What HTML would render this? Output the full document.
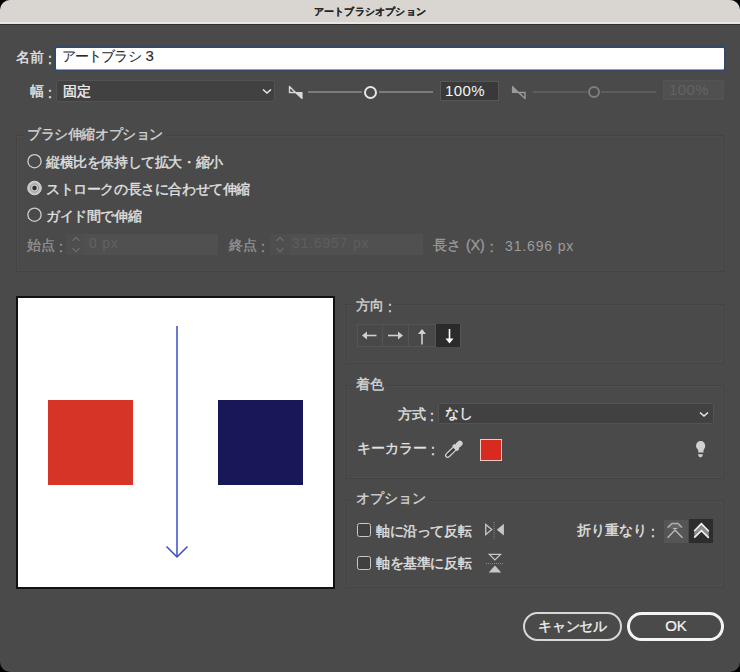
<!DOCTYPE html>
<html lang="ja">
<head>
<meta charset="utf-8">
<style>
*{box-sizing:border-box;margin:0;padding:0}
html,body{width:740px;height:672px;overflow:hidden;background:#000}
body{font-family:"Liberation Sans",sans-serif;color:#d4d4d4;position:relative;-webkit-text-stroke-width:0.35px}
.c{position:relative;top:1.5px}
.win{position:absolute;left:0;top:0;width:740px;height:672px;background:#4a4a4a;border-radius:10px;overflow:hidden}
.titlebar{position:absolute;left:0;top:0;width:740px;height:25px;background:#d9d5d1;border-bottom:1px solid #33312f;box-shadow:inset 0 -2px 0 #e9e6e3}
.title{position:absolute;left:0;top:4px;width:740px;text-align:center;font-size:10.3px;font-weight:bold;color:#262626;line-height:15px;-webkit-text-stroke-width:0.1px;letter-spacing:0.2px}
.a{position:absolute;white-space:nowrap}
.lbl{font-size:14px;line-height:16px;color:#e2e2e2}
.group{position:absolute;border:1px solid #434343;box-shadow:inset 0 0 0 1px #4e4e4e}
.ls{letter-spacing:-0.4px}
.legend{position:absolute;background:#4a4a4a;padding:0 3px 0 3px;font-size:14px;line-height:16px;color:#d6d6d6}
</style>
</head>
<body>
<div class="win">
  <div class="titlebar"><div class="title">アートブラシオプション</div></div>

  <!-- name -->
  <div class="a lbl" style="left:16px;top:49px">名前 <span class="c">:</span></div>
  <div class="a" style="left:54px;top:45px;width:672px;height:26px;border-radius:3px;background:#34496c;box-shadow:0 1px 0 #2b5566"></div>
  <div class="a" style="left:56px;top:48px;width:668px;height:21px;background:#fff;border-radius:1px;box-shadow:0 1px 0 #5fb5d5"></div>
  <div class="a" style="left:62px;top:47px;font-size:14px;line-height:18px;color:#2a2a2a;-webkit-text-stroke-width:0.1px;letter-spacing:-0.9px">アートブラシ<span style="letter-spacing:0;margin-left:5px;font-size:15px">3</span></div>

  <!-- width -->
  <div class="a lbl" style="left:30px;top:83px">幅 <span class="c">:</span></div>
  <div class="a" style="left:56px;top:80px;width:219px;height:22px;background:#414141;border:1px solid #535353;border-radius:2px"></div>
  <div class="a lbl" style="left:63px;top:83px;color:#f0f0f0">固定</div>
  <svg class="a" style="left:260px;top:86px" width="14" height="10"><path d="M3 3.5 L7 7 L11 3.5" fill="none" stroke="#e8e8e8" stroke-width="1.6"/></svg>

  <svg class="a" style="left:286px;top:83px" width="20" height="19"><path d="M3.5 3.5 L9.5 9.5 L3.5 9.5 Z" fill="none" stroke="#d8d8d8" stroke-width="1.4" stroke-linejoin="round"/><path d="M9.5 9.5 L16 9.5 L16 15.5 Z" fill="#d8d8d8" stroke="#d8d8d8" stroke-width="1.2" stroke-linejoin="round"/></svg>
  <div class="a" style="left:308px;top:91px;width:54px;height:2px;background:#7c7c7c"></div><div class="a" style="left:379px;top:91px;width:54px;height:2px;background:#7c7c7c"></div>
  <div class="a" style="left:364px;top:85.5px;width:13px;height:13px;border-radius:50%;border:2px solid #e6e6e6;background:#4a4a4a"></div>
  <div class="a" style="left:440px;top:81px;width:59px;height:20px;background:#393939;border:1px solid #575757"></div>
  <div class="a" style="left:445px;top:81.5px;font-size:15px;line-height:18px;color:#f6f6f6;-webkit-text-stroke-width:0;letter-spacing:0.4px">100%</div>

  <svg class="a" style="left:509px;top:83px" width="20" height="19"><path d="M3.5 3.5 L9.5 9.5 L3.5 9.5 Z" fill="#9a9a9a" stroke="#9a9a9a" stroke-width="1.2" stroke-linejoin="round"/><path d="M9.5 9.5 L16 9.5 L16 15.5 Z" fill="none" stroke="#9a9a9a" stroke-width="1.4" stroke-linejoin="round"/></svg>
  <div class="a" style="left:533px;top:91px;width:54px;height:2px;background:#5c5c5c"></div><div class="a" style="left:601px;top:91px;width:55px;height:2px;background:#5c5c5c"></div>
  <div class="a" style="left:588px;top:86px;width:12px;height:12px;border-radius:50%;border:2px solid #7e7e7e;background:#4a4a4a"></div>
  <div class="a" style="left:663px;top:80px;width:61px;height:20px;background:#505050;border:1px solid #545454"></div>
  <div class="a" style="left:669px;top:81px;font-size:15px;line-height:18px;color:#626262;-webkit-text-stroke-width:0;letter-spacing:0.4px">100%</div>

  <!-- group 1 -->
  <div class="group" style="left:16px;top:135px;width:708px;height:137px"></div>
  <div class="legend a ls" style="left:24px;top:126px">ブラシ伸縮オプション</div>
  <svg class="a" style="left:26px;top:153px" width="18" height="18"><circle cx="8.5" cy="8.2" r="6.6" fill="none" stroke="#cdcdcd" stroke-width="1.3"/></svg>
  <div class="a lbl ls" style="left:46px;top:154px">縦横比を保持して拡大・縮小</div>
  <svg class="a" style="left:26px;top:180px" width="18" height="18"><circle cx="8.5" cy="8" r="6.8" fill="#c4c4c4" stroke="#d6d6d6" stroke-width="1"/><circle cx="8.5" cy="8" r="4.2" fill="none" stroke="#9a9a9a" stroke-width="1"/><circle cx="8.5" cy="8" r="2.2" fill="#2a2a2a"/></svg>
  <div class="a lbl ls" style="left:46px;top:181px">ストロークの長さに合わせて伸縮</div>
  <svg class="a" style="left:26px;top:207px" width="18" height="18"><circle cx="8.5" cy="7.7" r="6.6" fill="none" stroke="#cdcdcd" stroke-width="1.3"/></svg>
  <div class="a lbl ls" style="left:46px;top:208px">ガイド間で伸縮</div>

  <div class="a lbl" style="left:27px;top:237px;color:#939393">始点 <span class="c">:</span></div>
  <div class="a" style="left:66px;top:234px;width:18px;height:21px;background:#4e4e4e"></div>
  <svg class="a" style="left:69px;top:235px" width="14" height="20"><path d="M3.5 5.8 L7 2.3 L10.5 5.8 M3.5 13.2 L7 16.7 L10.5 13.2" fill="none" stroke="#6e6e6e" stroke-width="1.2"/></svg>
  <div class="a" style="left:84px;top:234px;width:134px;height:21px;background:#505050"></div>
  <div class="a" style="left:89px;top:234.5px;font-size:14px;line-height:17px;color:#626262;-webkit-text-stroke-width:0;letter-spacing:0.8px">0 px</div>

  <div class="a lbl" style="left:229px;top:237px;color:#939393">終点 <span class="c">:</span></div>
  <div class="a" style="left:270px;top:234px;width:20px;height:21px;background:#4e4e4e"></div>
  <svg class="a" style="left:273px;top:235px" width="14" height="20"><path d="M3.5 5.8 L7 2.3 L10.5 5.8 M3.5 13.2 L7 16.7 L10.5 13.2" fill="none" stroke="#6e6e6e" stroke-width="1.2"/></svg>
  <div class="a" style="left:290px;top:234px;width:133px;height:21px;background:#505050"></div>
  <div class="a" style="left:292px;top:234.5px;font-size:14px;line-height:17px;color:#5e5e5e;-webkit-text-stroke-width:0;letter-spacing:0.8px">31.6957 px</div>

  <div class="a lbl" style="left:433px;top:237px;color:#9a9a9a">長さ<span style="margin-left:5px">(X)</span><span class="c" style="margin-left:5px">:</span></div>
  <div class="a" style="left:505px;top:238px;font-size:14px;line-height:17px;color:#9c9c9c;letter-spacing:0.85px;-webkit-text-stroke-width:0">31.696 px</div>

  <!-- preview -->
  <div class="a" style="left:16px;top:296px;width:319px;height:293px;background:#fff;border:2px solid #111"></div>
  <div class="a" style="left:48px;top:400px;width:85px;height:85px;background:#d63427"></div>
  <div class="a" style="left:218px;top:400px;width:85px;height:85px;background:#181757"></div>
  <svg class="a" style="left:150px;top:320px" width="50" height="245"><path d="M27 6 L27 236" stroke="#3a4bc6" stroke-width="1.5" fill="none"/><path d="M16.5 226.5 L27 237 L37.5 226.5" stroke="#3a4bc6" stroke-width="1.5" fill="none"/></svg>

  <!-- group direction -->
  <div class="group" style="left:346px;top:304px;width:378px;height:60px"></div>
  <div class="legend a" style="left:353px;top:297px">方向 <span class="c">:</span></div>
  <div class="a" style="left:357px;top:324px;width:104px;height:23px;border:1px solid #555;background:#484848"></div>
  <div class="a" style="left:382px;top:324px;width:1px;height:23px;background:#555"></div>
  <div class="a" style="left:408px;top:324px;width:1px;height:23px;background:#555"></div>
  <div class="a" style="left:435px;top:324px;width:1px;height:23px;background:#555"></div>
  <div class="a" style="left:436px;top:324px;width:24px;height:22.5px;background:#2b2b2b"></div>
  <svg class="a" style="left:357px;top:323.7px" width="104" height="24">
    <g fill="#d0d0d0" stroke="#d0d0d0">
      <path d="M9 11.5 L19.5 11.5" stroke-width="1.6"/><path d="M5 11.5 L10 7.5 L10 15.5 Z" stroke="none"/>
      <path d="M31 11.5 L41.5 11.5" stroke-width="1.6"/><path d="M46 11.5 L41 7.5 L41 15.5 Z" stroke="none"/>
      <path d="M65 9 L65 20.5" stroke-width="1.6"/><path d="M65 5 L61 10 L69 10 Z" stroke="none"/>
    </g>
    <g fill="#fff" stroke="#fff">
      <path d="M92.5 5 L92.5 15" stroke-width="1.6"/><path d="M92.5 19.5 L88.5 14.5 L96.5 14.5 Z" stroke="none"/>
    </g>
  </svg>

  <!-- group coloring -->
  <div class="group" style="left:346px;top:385px;width:378px;height:94px"></div>
  <div class="legend a" style="left:353px;top:376px">着色</div>
  <div class="a lbl" style="left:398px;top:406px">方式 <span class="c">:</span></div>
  <div class="a" style="left:438px;top:402.5px;width:276px;height:21.5px;background:#414141;border:1px solid #535353;border-radius:2px"></div>
  <div class="a lbl" style="left:445px;top:405px;color:#f0f0f0">なし</div>
  <svg class="a" style="left:697px;top:409px" width="14" height="10"><path d="M3 3.5 L7 7 L11 3.5" fill="none" stroke="#e8e8e8" stroke-width="1.6"/></svg>
  <div class="a lbl" style="left:357px;top:440px">キーカラー <span class="c">:</span></div>
  <svg class="a" style="left:440px;top:436px" width="26" height="26"><g transform="translate(5.8 21.1) rotate(-44)"><rect x="0.6" y="-2" width="12.4" height="4" rx="2" fill="#3a3a3a" stroke="#d2d2d2" stroke-width="1.3"/><rect x="12" y="-3.6" width="3.6" height="7.2" rx="0.8" fill="#d2d2d2"/><rect x="14.5" y="-2.8" width="7.8" height="5.6" rx="2.8" fill="#d2d2d2"/></g></svg>
  <div class="a" style="left:480px;top:439px;width:22px;height:22px;background:#d92a20;border:1.5px solid #f2c9c2"></div>
  <svg class="a" style="left:688px;top:436px" width="26" height="26"><path d="M8 10 C8 7 10 5 12.6 5 C15.2 5 17.2 7 17.2 10 C17.2 12.2 15.8 13.3 15.5 14.5 L15.5 16.6 L10.3 16.6 L10.3 14.5 C10 13.3 8 12.2 8 10 Z" fill="#d0d0d0"/><path d="M9.9 18.2 L15 18.2 L14.2 20.6 Q12.5 22.2 10.8 20.6 Z" fill="#d0d0d0"/></svg>

  <!-- group options -->
  <div class="group" style="left:346px;top:500px;width:378px;height:88px"></div>
  <div class="legend a" style="left:353px;top:490px">オプション</div>
  <div class="a" style="left:357px;top:523px;width:14px;height:13.5px;border:1.5px solid #c8c8c8;border-radius:2.5px;background:#404040"></div>
  <div class="a lbl ls" style="left:376px;top:523px">軸に沿って反転</div>
  <svg class="a" style="left:482px;top:522px" width="24" height="18"><path d="M3.75 2.5 L9.7 7.6 L3.75 12.7 Z" fill="none" stroke="#c8c8c8" stroke-width="1.3" stroke-linejoin="miter"/><path d="M12.1 0 L12.1 16.6" stroke="#8c8c8c" stroke-width="1" stroke-dasharray="1 1"/><path d="M21.9 1.8 L14.8 7.7 L21.9 13.6 Z" fill="#c8c8c8"/></svg>
  <div class="a" style="left:357px;top:556px;width:14px;height:13.5px;border:1.5px solid #c8c8c8;border-radius:2.5px;background:#404040"></div>
  <div class="a lbl ls" style="left:376px;top:555px">軸を基準に反転</div>
  <svg class="a" style="left:485px;top:551px" width="20" height="24"><path d="M4.4 3.35 L15.5 3.35 L9.95 8.9 Z" fill="none" stroke="#c8c8c8" stroke-width="1.3"/><path d="M1 12.6 L18 12.6" stroke="#8c8c8c" stroke-width="1" stroke-dasharray="1 1"/><path d="M3.7 21.5 L16.2 21.5 L9.95 14.4 Z" fill="#c8c8c8"/></svg>
  <div class="a lbl" style="left:577px;top:522px">折り重なり <span class="c">:</span></div>
  <div class="a" style="left:664px;top:520px;width:24px;height:23px;background:#555"></div>
  <div class="a" style="left:689px;top:519px;width:24px;height:24px;background:#2d2d2d"></div>
  <svg class="a" style="left:664px;top:519px" width="49" height="25">
    <path d="M5 8.8 L8.5 5.2 L13.5 5.2 L17 8.8 L11 11.5 Z" fill="#646464"/>
    <path d="M3.6 8.6 L8 4.4 L14 4.4 L18 8.6" fill="none" stroke="#b0b0b0" stroke-width="1.5"/>
    <path d="M9.2 9.5 L12.9 9.5" stroke="#bdbdbd" stroke-width="1.1"/>
    <path d="M3.6 18.7 L11 11 L18.5 18.7" fill="none" stroke="#b8b8b8" stroke-width="1.5"/>
    <path d="M30.2 12 L37.4 4.6 L44.8 12.2 L44.8 18.7 L37.4 11.3 L30.2 18.4 Z" fill="#8c8c8c"/>
    <path d="M30.2 12 L37.4 4.6 L44.8 12.2" fill="none" stroke="#f2f2f2" stroke-width="1.6"/>
    <path d="M30.2 18.6 L37.4 11.6 L44.8 18.9" fill="none" stroke="#f2f2f2" stroke-width="1.6"/>
  </svg>

  <!-- buttons -->
  <div class="a" style="left:523px;top:612px;width:99px;height:29px;border:2px solid #d8d8d8;border-radius:15px"></div>
  <div class="a" style="left:523px;top:617px;width:99px;text-align:center;font-size:14px;line-height:18px;color:#f0f0f0;letter-spacing:-0.3px">キャンセル</div>
  <div class="a" style="left:627px;top:612px;width:97px;height:29px;border:3px solid #f4f4f4;border-radius:15px"></div>
  <div class="a" style="left:627px;top:617px;width:98px;text-align:center;font-size:15px;line-height:18px;color:#f4f4f4;-webkit-text-stroke-width:0.2px">OK</div>
</div>
</body>
</html>
